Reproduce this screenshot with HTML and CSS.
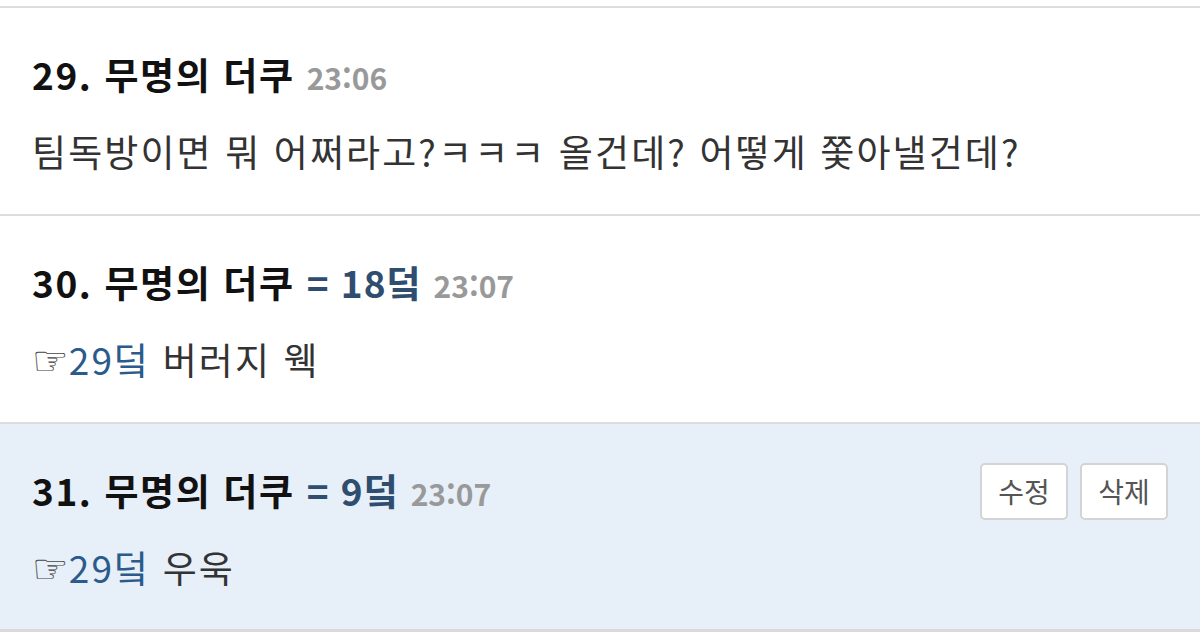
FILE: index.html
```html
<!DOCTYPE html>
<html lang="ko">
<head>
<meta charset="utf-8">
<link rel="stylesheet" href="styles.css">
</head>
<body>
<div class="top-space"></div>
<ul class="comments">
  <li class="comment">
    <div class="head">
      <div class="meta"><span class="num">29. 무명의 더쿠</span> <span class="time">23:06</span></div>
    </div>
    <p class="body">팀독방이면 뭐 어쩌라고?ㅋㅋㅋ 올건데? 어떻게 쫓아낼건데?</p>
  </li>
  <li class="comment">
    <div class="head">
      <div class="meta"><span class="num">30. 무명의 더쿠</span> <span class="dk">= 18덬</span> <span class="time">23:07</span></div>
    </div>
    <p class="body"><span class="hand">☞</span><span class="ref">29덬</span> 버러지 웩</p>
  </li>
  <li class="comment mine">
    <div class="head">
      <div class="meta"><span class="num">31. 무명의 더쿠</span> <span class="dk">= 9덬</span> <span class="time">23:07</span></div>
      <div class="actions"><button class="btn">수정</button><button class="btn">삭제</button></div>
    </div>
    <p class="body"><span class="hand">☞</span><span class="ref">29덬</span> 우욱</p>
  </li>
</ul>
</body>
</html>
```
FILE: styles.css
```css
html, body {
  margin: 0;
  padding: 0;
  background: #ffffff;
}
body {
  font-family: "Noto Sans CJK KR", "Noto Sans", sans-serif;
  color: #333333;
}
.top-space {
  height: 6px;
}
.comments {
  list-style: none;
  margin: 0;
  padding: 0;
  border-bottom: 3px solid #dadada;
}
.comment {
  border-top: 2px solid #dcdcdc;
  padding: 45px 32px 0 32px;
  box-sizing: border-box;
  height: 208px;
}
.comment.mine {
  background: #e7eff8;
  height: 207px;
}
.head {
  display: flex;
  justify-content: space-between;
  align-items: center;
  height: 44px;
}
.meta {
  font-size: 37px;
  line-height: 44px;
  font-weight: 700;
  color: #111111;
  white-space: nowrap;
  letter-spacing: 1.6px;
}
.dk {
  color: #2f4d6e;
  letter-spacing: 1px;
}
.time {
  color: #999999;
  font-size: 30px;
  letter-spacing: 0;
}
.actions {
  display: flex;
  gap: 12px;
}
.btn {
  font-family: inherit;
  font-size: 28px;
  color: #555555;
  background: #ffffff;
  border: 2px solid #d4d4d4;
  border-radius: 5px;
  width: 88px;
  height: 57px;
  padding: 0;
  line-height: 1;
}
.body {
  margin: 32px 0 0 0;
  font-size: 37px;
  line-height: 44px;
  color: #333333;
  white-space: nowrap;
  letter-spacing: 2.1px;
}
.hand {
  font-family: "DejaVu Sans", sans-serif;
  font-size: 41px;
  color: #444444;
  letter-spacing: 0;
}
.ref {
  color: #2a5b8c;
}
```
